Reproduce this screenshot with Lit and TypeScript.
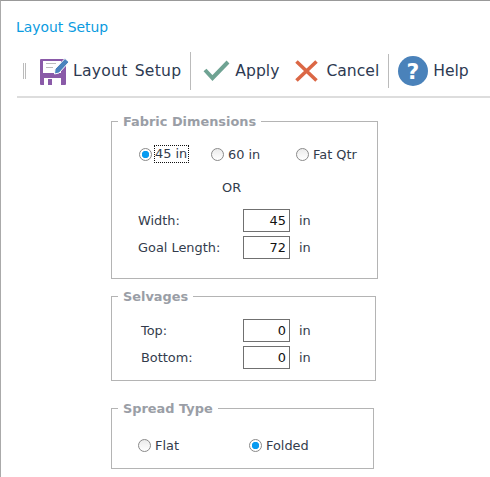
import {LitElement, html, css} from 'lit'
import {customElement} from 'lit/decorators.js'

@customElement('app-root')
export class AppRoot extends LitElement {
  static styles = css`
    :host {
      display: block;
      width: 490px;
      height: 477px;
      box-sizing: border-box;
      overflow: hidden;
      background: #fff;
      border-top: 1px solid #999;
      border-left: 1px solid #aaa;
      font-family: "DejaVu Sans", sans-serif;
      font-size: 12.9px;
      color: #333c4c;
    }
    .title {
      height: 50px;
      padding: 18px 0 0 15px;
      box-sizing: border-box;
      font-size: 13.9px;
      line-height: 17px;
      color: #0a9be0;
    }
    .toolbar {
      display: flex;
      align-items: center;
      height: 39px;
      margin-left: 16px;
      padding-bottom: 6px;
      border-bottom: 2px solid #ddd;
      font-size: 15.6px;
      word-spacing: 2px;
      color: #2d3a52;
    }
    .grip {
      width: 1px;
      height: 16px;
      margin: 0 14px 0 6px;
      border-left: 1px solid #bbb;
      border-right: 1px solid #bbb;
    }
    .tool { display: flex; align-items: center; white-space: nowrap; }
    .wide { letter-spacing: 0.25px; }
    .sep { width: 1px; height: 38px; background: #bbb; }
    .form {
      display: flex;
      flex-direction: column;
      margin: 16px 0 0 110px;
    }
    fieldset {
      margin: 0;
      padding: 0;
      box-sizing: border-box;
      border: 1px solid #b4b4b4;
    }
    legend {
      margin-left: 6px;
      padding: 0 5px;
      font-size: 12.9px;
      font-weight: bold;
      line-height: 15px;
      color: #9a9ea6;
    }
    .fabric { width: 267px; height: 165px; }
    .selvages { width: 265px; height: 92px; margin-top: 10px; }
    .spread { width: 263px; height: 68px; margin-top: 20px; }
    .radios { display: flex; align-items: center; height: 18px; }
    .fabric .radios { margin: 16px 0 0 27px; }
    .spread .radios { margin: 20px 0 0 26px; }
    .radio { display: flex; align-items: center; gap: 4px; }
    .r45 { width: 72px; }
    .r60 { width: 85px; }
    .rflat { width: 111px; }
    .dot {
      width: 13px;
      height: 13px;
      box-sizing: border-box;
      border: 1px solid #8a8a8a;
      border-radius: 50%;
      background: linear-gradient(#ebebeb, #fff);
      flex: none;
    }
    .dot.on {
      background: radial-gradient(circle, #0a9bf0 0 3.4px, #fff 4px);
    }
    .focus { outline: 1px dotted #111; outline-offset: 0; padding: 0 1px 1px 0; margin-left: -1px; }
    .or { margin: 17px 0 0 110px; height: 15px; line-height: 15px; }
    .fields { display: grid; grid-template-columns: 105px 47px auto; row-gap: 4px; align-items: center; }
    .fabric .fields { margin: 14px 0 0 26px; }
    .selvages .fields { margin: 15px 0 0 29px; grid-template-columns: 102px 47px auto; }
    .box {
      height: 23px;
      box-sizing: border-box;
      border: 1px solid #707070;
      padding: 0 3px;
      text-align: right;
      line-height: 21px;
      color: #111;
    }
    .unit { padding-left: 9px; }
  `

  renderField(label: string, value: string) {
    return html`
      <span>${label}</span>
      <span class="box">${value}</span>
      <span class="unit">in</span>
    `
  }

  render() {
    return html`
      <div class="title">Layout Setup</div>
      <div class="toolbar">
        <span class="grip"></span>
        <div class="tool wide">
          <svg width="30" height="30" viewBox="0 0 30 30" style="margin-right:3px">
            <path d="M1 3h24a1 1 0 0 1 1 1v24a1 1 0 0 1-1 1H1a1 1 0 0 1-1-1V4a1 1 0 0 1 1-1z" fill="#8a5aa8"/>
            <rect x="3" y="5" width="18" height="12" fill="#fff"/>
            <path d="M6 7.5h10M6 11.5h7" stroke="#bbb" stroke-width="1"/>
            <rect x="4" y="22" width="17" height="7" fill="#fff"/>
            <rect x="8" y="23" width="4" height="6" fill="#8a5aa8"/>
            <path d="M15 13 25 2.5l4 3.5-10 11-4.500 1z" fill="#4a83bd" stroke="#fff" stroke-width="1"/>
          </svg>
          Layout Setup
        </div>
        <span class="sep" style="margin:0 12px 0 9px"></span>
        <div class="tool">
          <svg width="27" height="22" viewBox="0 0 27 22" style="margin-right:5px">
            <path d="M2 10 9.500 18 25 2" fill="none" stroke="#6fa393" stroke-width="4"/>
          </svg>
          Apply
        </div>
        <div class="tool" style="margin-left:16px">
          <svg width="23" height="22" viewBox="0 0 23 22" style="margin-right:8px">
            <path d="M1.500 1.500 21.500 20.500M21.500 1.500 1.500 20.500" fill="none" stroke="#db6745" stroke-width="3.600"/>
          </svg>
          Cancel
        </div>
        <span class="sep" style="margin:0 9px;height:34px"></span>
        <div class="tool">
          <svg width="30" height="30" viewBox="0 0 30 30" style="margin-right:5px">
            <circle cx="15" cy="15" r="15" fill="#4a82ba"/>
            <text x="15" y="23" text-anchor="middle" font-family="DejaVu Sans" font-weight="bold" font-size="22" fill="#fff">?</text>
          </svg>
          Help
        </div>
      </div>
      <div class="form">
        <fieldset class="fabric">
          <legend>Fabric Dimensions</legend>
          <div class="radios">
            <div class="radio r45"><span class="dot on"></span><span class="focus">45 in</span></div>
            <div class="radio r60"><span class="dot"></span>60 in</div>
            <div class="radio"><span class="dot"></span>Fat Qtr</div>
          </div>
          <div class="or">OR</div>
          <div class="fields">
            ${this.renderField('Width:', '45')}
            ${this.renderField('Goal Length:', '72')}
          </div>
        </fieldset>
        <fieldset class="selvages">
          <legend>Selvages</legend>
          <div class="fields">
            ${this.renderField('Top:', '0')}
            ${this.renderField('Bottom:', '0')}
          </div>
        </fieldset>
        <fieldset class="spread">
          <legend>Spread Type</legend>
          <div class="radios">
            <div class="radio rflat"><span class="dot"></span>Flat</div>
            <div class="radio"><span class="dot on"></span>Folded</div>
          </div>
        </fieldset>
      </div>
    `
  }
}
